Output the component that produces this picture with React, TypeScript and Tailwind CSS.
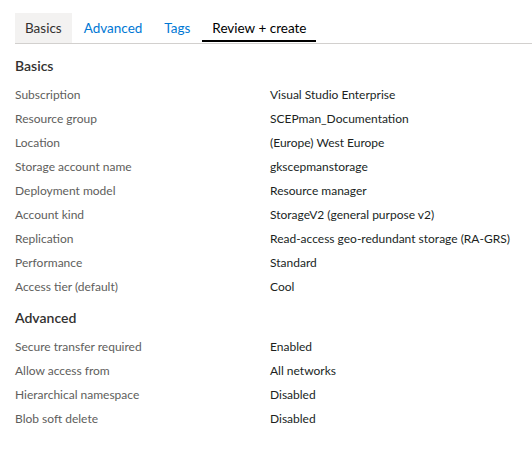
import React from "react";

const basics: [string, string][] = [
  ["Subscription", "Visual Studio Enterprise"],
  ["Resource group", "SCEPman_Documentation"],
  ["Location", "(Europe) West Europe"],
  ["Storage account name", "gkscepmanstorage"],
  ["Deployment model", "Resource manager"],
  ["Account kind", "StorageV2 (general purpose v2)"],
  ["Replication", "Read-access geo-redundant storage (RA-GRS)"],
  ["Performance", "Standard"],
  ["Access tier (default)", "Cool"],
];

const advanced: [string, string][] = [
  ["Secure transfer required", "Enabled"],
  ["Allow access from", "All networks"],
  ["Hierarchical namespace", "Disabled"],
  ["Blob soft delete", "Disabled"],
];

function Rows({ rows }: { rows: [string, string][] }) {
  return (
    <div className="flex flex-col">
      {rows.map(([k, v]) => (
        <div key={k} className="flex h-[24px] items-center text-[12px]">
          <div className="w-[255px] text-[#605e5c]">{k}</div>
          <div className="text-[#201f1e]">{v}</div>
        </div>
      ))}
    </div>
  );
}

export default function App() {
  return (
    <div
      className="w-[532px] h-[457px] bg-white pl-[15px]"
      style={{ fontFamily: '"Segoe UI", Lato, "Noto Sans", sans-serif' }}
    >
      <div className="pt-[13px]">
        <div className="flex gap-[2px] border-b border-[#d2d0ce] text-[13.5px]">
          <div className="h-[30px] px-[10px] flex items-center bg-[#f3f2f1] text-[#323130]">Basics</div>
          <div className="h-[30px] px-[10px] flex items-center text-[#0078d4]">Advanced</div>
          <div className="h-[30px] px-[10px] flex items-center text-[#0078d4]">Tags</div>
          <div className="h-[30px] px-[10px] flex items-center text-[#000] relative">
            Review + create
            <div className="absolute left-0 right-0 bottom-[1px] h-[2px] bg-black" />
          </div>
        </div>
      </div>
      <div className="mt-[12px] h-[20px] leading-[20px] text-[14px] font-semibold text-[#323130]">Basics</div>
      <div className="mt-[7px]">
        <Rows rows={basics} />
      </div>
      <div className="mt-[9px] h-[20px] leading-[20px] text-[14px] font-semibold text-[#323130]">Advanced</div>
      <div className="mt-[7px]">
        <Rows rows={advanced} />
      </div>
    </div>
  );
}
